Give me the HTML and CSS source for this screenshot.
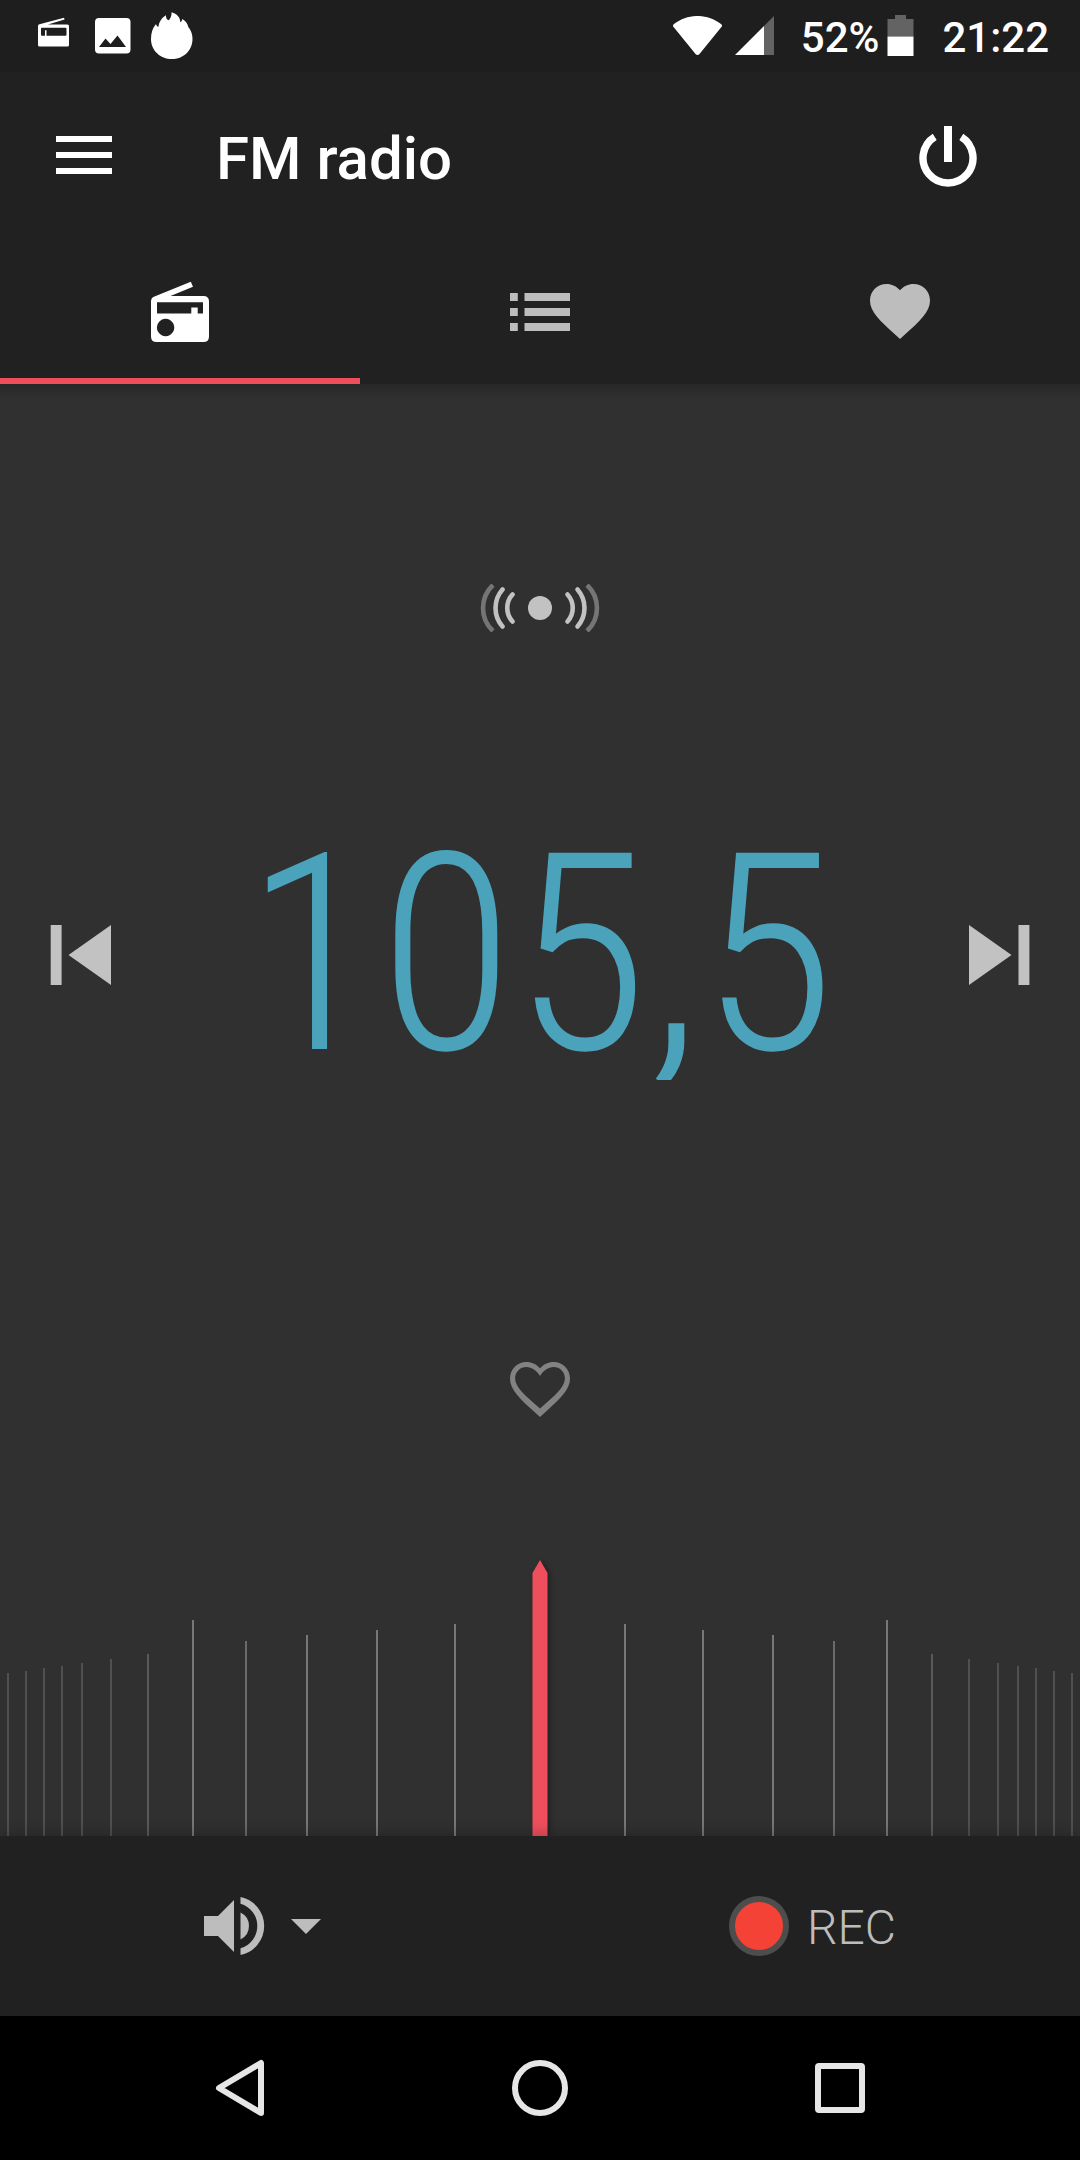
FILE: index.html
```html
<!DOCTYPE html>
<html>

<head>
    <meta charset="utf-8">
    <title>FM radio</title>
    <meta name="viewport" content="width=device-width,initial-scale=1" />
    <link rel="stylesheet" href="styles.css">
</head>

<body>
    <div class="status-bar">
        <div class="notifications">
            <svg width="32" height="30" viewBox="38 17 32 30">
                <path fill="#fff" fill-rule="evenodd" d="M39.5 24.3L64 17.8l.6 1.8L48 24.5h19.5q1.5 0 1.5 1.5v19q0 1.5-1.5 1.5h-28q-1.5 0-1.5-1.5V26q0-1.400 1.500-1.700zM42 27.700q-1 0-1 1v6q0 1 1 1h3v-5.500h1.500v5.500h19q1 0 1-1v-6q0-1-1-1z" />
            </svg>
            <svg width="36" height="36" viewBox="95 18 36 36">
                <path fill="#fff" fill-rule="evenodd" d="M99 18h27.500q4 0 4 4v27.500q0 4-4 4H99q-4 0-4-4V22q0-4 4-4zM99 47h27l-8.500-11.500-7 8.500-5-5.500z" />
            </svg>
            <svg width="42" height="48" viewBox="151 12 42 48">
                <path fill="#fff" d="M151 39c0-6 1.500-11 5-15 .3 1.600 1 2.500 2.500 2.700.6-5 3.500-9 7.500-11.400-.3 2.500.9 4.700 2.800 4.900 1.700-1.800 2.800-4.500 2.800-8 5.400 1.700 8.600 5 8.700 10 1-.5 1.700-1.500 2-3.300 3 1.800 5.300 4.500 6 8 3 3.500 4.200 7.500 4.200 12 0 11.500-9.300 20.200-20.700 20.200S151 50.500 151 39z" />
            </svg>
        </div>
        <div class="system">
            <svg class="wifi" width="50" height="40" viewBox="673 16 50 40">
                <path fill="#fff" d="M674 27.500q-2-2 0-3.500c14-10.700 33-10.700 47 0q2 1.500 0 3.500L699.500 54q-2 2-4 0z" />
            </svg>
            <svg class="signal" width="40" height="40" viewBox="735 16 40 40">
                <path fill="#636363" d="M774 16v39h-10V26z" />
                <path fill="#fff" d="M764 26v29h-29z" />
            </svg>
            <span class="percent">52%</span>
            <svg class="battery" width="27" height="41" viewBox="0 0 27 41">
                <path fill="#636363" d="M8 0h11v4h7.500v17.500H.5V4H8z" />
                <path fill="#fff" d="M.5 21.500h26V41H.5z" />
            </svg>
            <span class="clock">21:22</span>
        </div>
    </div>

    <div class="toolbar">
        <svg class="menu" width="56" height="38" viewBox="0 0 56 38">
            <path fill="#fff" d="M0 0h56v6H0zM0 16h56v6H0zM0 32h56v6H0z" />
        </svg>
        <h1>FM radio</h1>
        <svg class="power" width="60" height="62" viewBox="918 125 60 62">
            <path fill="#fff" d="M944 126h8v36h-8z" />
            <path fill="none" stroke="#fff" stroke-width="7.400" d="M934.700 136.800a25 25 0 1 0 26.600 0" />
        </svg>
    </div>

    <div class="tabs">
        <div class="tab active">
            <svg width="60" height="72" viewBox="150 276 60 72">
                <path fill="#fff" fill-rule="evenodd" d="M154.500 296.500L190.800 281.800l2.200 5L170.500 296H203.500q5.500 0 5.500 5.500v35q0 5.500-5.500 5.500h-47q-5.500 0-5.500-5.500v-35q0-3.800 3.500-5zM157 302.300v11.200h34.300v-6h6.400v6h5.300v-11.200zM165.600 318.800a8.700 8.700 0 1 0 .01 0z" />
            </svg>
        </div>
        <div class="tab">
            <svg width="60" height="72" viewBox="510 276 60 72">
                <path fill="#bdbdbd" d="M510 293h7.800v8H510zM524.500 293H570v8h-45.500zM510 308h7.800v8H510zM524.500 308H570v8h-45.500zM510 323h7.800v8H510zM524.500 323H570v8h-45.500z" />
            </svg>
        </div>
        <div class="tab heart">
            <svg width="72" height="72" viewBox="0 0 24 24">
                <path fill="#bdbdbd" d="M12 21.350l-1.450-1.320C5.400 15.360 2 12.280 2 8.500 2 5.420 4.420 3 7.500 3c1.740 0 3.410.81 4.500 2.090C13.090 3.810 14.760 3 16.500 3 19.580 3 22 5.420 22 8.500c0 3.780-3.400 6.860-8.550 11.540L12 21.350z" />
            </svg>
        </div>
    </div>

    <div class="tuner">
        <svg class="stereo" width="120" height="48" viewBox="480 584 120 48">
            <circle cx="540" cy="608" r="12" fill="#c2c2c2" />
            <g fill="none" stroke="#c2c2c2" stroke-width="4.600" stroke-linecap="round">
                <path d="M567.500 594.500a20 20 0 0 1 0 27M577.500 589.500a28 28 0 0 1 0 37" />
                <path d="M512.500 594.500a20 20 0 0 0 0 27M502.500 589.500a28 28 0 0 0 0 37" />
            </g>
            <path fill="none" stroke="#757575" stroke-width="4.600" d="M587 585a31.500 31.500 0 0 1 0 46M493 585a31.500 31.500 0 0 0 0 46" />
        </svg>

        <div class="frequency">
            <svg width="61" height="60" viewBox="0 0 61 60">
                <path fill="#c2c2c2" d="M.7 0h10.900v60H.7zM61 0v60L18.500 30z" />
            </svg>
            <div class="value">105,5</div>
            <svg width="61" height="60" viewBox="0 0 61 60">
                <path fill="#c2c2c2" d="M49.500 0h10.900v60H49.500zM0 0v60l42.500-30z" />
            </svg>
        </div>

        <svg class="favorite" width="72" height="72" viewBox="0 0 24 24">
            <path fill="#828282" d="M16.500 3c-1.740 0-3.410.81-4.500 2.090C10.910 3.810 9.240 3 7.500 3 4.420 3 2 5.420 2 8.500c0 3.780 3.400 6.860 8.550 11.540L12 21.350l1.450-1.320C18.600 15.360 22 12.280 22 8.500 22 5.420 19.580 3 16.500 3zM12.100 18.450l-.1.100-.1-.1C7.140 14.240 3.700 11.390 3.700 8.500 3.700 6.300 5.400 4.700 7.500 4.700c1.700 0 3.400 1.200 4.500 3 1.100-1.800 2.800-3 4.500-3 2.100 0 3.800 1.600 3.800 3.800 0 2.890-3.440 5.740-8.200 9.950z" />
        </svg>

        <svg class="scale" width="1080" height="280" viewBox="0 1556 1080 280">
            <g fill="#777">
                <path d="M192 1620h2v216h-2zM306 1635h2v201h-2zM376 1630h2v206h-2zM454 1624h2v212h-2z" />
                <path d="M886 1620h2v216h-2zM772 1635h2v201h-2zM702 1630h2v206h-2zM624 1624h2v212h-2z" />
            </g>
            <path fill="#6b6b6b" d="M245 1641h2v195h-2zM833 1641h2v195h-2z" />
            <path fill="#5a5a5a" d="M147 1654h2v182h-2zM931 1654h2v182h-2z" />
            <g fill="#505050">
                <path d="M7 1673h2v163H7zM25 1671h2v165h-2zM43 1668h2v168h-2zM61 1666h2v170h-2zM81 1663h2v173h-2zM110 1659h2v177h-2z" />
                <path d="M1071 1673h2v163h-2zM1053 1671h2v165h-2zM1035 1668h2v168h-2zM1017 1666h2v170h-2zM997 1663h2v173h-2zM968 1659h2v177h-2z" />
            </g>
            <path class="needle" fill="#ef4f5d" d="M540 1560l7.500 13v263h-15v-263z" />
        </svg>
    </div>

    <div class="controls">
        <div class="control volume">
            <svg width="61" height="60" viewBox="204 1896 61 60">
                <g fill="#bdbdbd">
                    <path d="M204 1916h14l16-16v52l-16-16h-14z" />
                    <path d="M240.500 1912.500a15 15 0 0 1 0 27z" />
                    <path d="M240.500 1897a29.600 29.600 0 0 1 0 58v-6.700a23.200 23.200 0 0 0 0-44.600z" />
                </g>
            </svg>
            <svg width="30" height="15" viewBox="0 0 30 15">
                <path fill="#bdbdbd" d="M0 0h30L15 15z" />
            </svg>
        </div>
        <div class="control record">
            <span class="rec-dot"></span>
            <span class="rec-label">REC</span>
        </div>
    </div>

    <div class="nav-bar">
        <svg width="60" height="60" viewBox="210 2058 60 60">
            <path fill="none" stroke="#e6e6e6" stroke-width="6" stroke-linejoin="round" d="M219 2088l42-25v50z" />
        </svg>
        <svg width="60" height="60" viewBox="0 0 60 60">
            <circle cx="30" cy="30" r="25" fill="none" stroke="#e6e6e6" stroke-width="6" />
        </svg>
        <svg width="60" height="60" viewBox="0 0 60 60">
            <rect x="8" y="8" width="44" height="44" rx="1" fill="none" stroke="#e6e6e6" stroke-width="6" />
        </svg>
    </div>
</body>

</html>
```

FILE: styles.css
```css
html, body {
    margin: 0;
    padding: 0;
    height: 100%;
}

body {
    display: flex;
    flex-direction: column;
    width: 1080px;
    height: 2160px;
    overflow: hidden;
    background: #303030;
    color: #fff;
    font-family: Roboto, "Liberation Sans", sans-serif;
}

svg {
    display: block;
    flex: none;
}

.status-bar {
    display: flex;
    justify-content: space-between;
    box-sizing: border-box;
    height: 72px;
    padding: 0 31px 0 38px;
    background: #1e1e1e;
    font-size: 42px;
    font-weight: 500;
    line-height: 72px;
}

.notifications {
    display: flex;
    padding-top: 12px;
}
.notifications svg:nth-child(1) {
    margin: 5px 25px 0 0;
}
.notifications svg:nth-child(2) {
    margin: 6px 20px 0 0;
}

.system {
    display: flex;
}
.system span {
    padding-top: 2px;
}
.wifi {
    margin: 16px 12px 0 0;
}
.signal {
    margin: 16px 26px 0 0;
}
.battery {
    margin: 15px 28px 0 8px;
}

.toolbar {
    display: flex;
    align-items: center;
    box-sizing: border-box;
    height: 168px;
    padding: 0 102px 0 56px;
    background: #212121;
}
.toolbar .menu {
    margin-bottom: 2px;
}
.toolbar h1 {
    flex: 1;
    margin: 5px 0 0 104px;
    font-size: 60px;
    font-weight: 500;
    line-height: 72px;
}

.tabs {
    display: flex;
    height: 144px;
    background: #212121;
}
.tab {
    display: flex;
    flex: 1;
    justify-content: center;
    align-items: center;
    box-sizing: border-box;
    border-bottom: 6px solid transparent;
    padding-top: 6px;
}
.tab.active {
    border-color: #ef4f5d;
}
.tab.heart {
    padding-top: 4px;
}

.tuner {
    display: flex;
    flex-direction: column;
    align-items: center;
    box-sizing: border-box;
    height: 1452px;
    padding-top: 200px;
    background: linear-gradient(#272727, #303030 14px);
}

.frequency {
    display: flex;
    justify-content: space-between;
    align-items: center;
    box-sizing: border-box;
    width: 100%;
    height: 324px;
    margin-top: 161px;
    padding: 0 50px;
}
.value {
    color: #4aa3bb;
    font-family: "Roboto Condensed", Roboto, sans-serif;
    font-size: 276px;
    font-weight: 300;
    font-stretch: 75%;
    line-height: 324px;
    /* the comma is cut off flat below the digits */
    clip-path: inset(0 0 37px 0);
}

.favorite {
    margin-top: 236px;
}

.scale {
    margin-top: auto;
}
.needle {
    filter: drop-shadow(3px 0 2px rgba(0, 0, 0, .25));
}

.controls {
    position: relative;
    display: flex;
    height: 180px;
    background: #212121;
    color: #bdbdbd;
    font-size: 48px;
    font-weight: 300;
    /* soft edge over the bottom of the dial */
    box-shadow: 0 0 16px rgba(0, 0, 0, .3);
}
.control {
    display: flex;
    align-items: center;
    box-sizing: border-box;
    width: 50%;
}
.volume {
    gap: 26px;
    padding-left: 204px;
}
.record {
    gap: 18px;
    padding-left: 189px;
}
.rec-dot {
    box-sizing: border-box;
    width: 60px;
    height: 60px;
    border: 6px solid #4d4d4d;
    border-radius: 50%;
    background: #f44336;
}
.rec-label {
    padding-top: 2px;
}

.nav-bar {
    position: relative;
    display: flex;
    justify-content: space-between;
    align-items: center;
    box-sizing: border-box;
    height: 144px;
    padding: 0 210px;
    background: #000;
}
```
